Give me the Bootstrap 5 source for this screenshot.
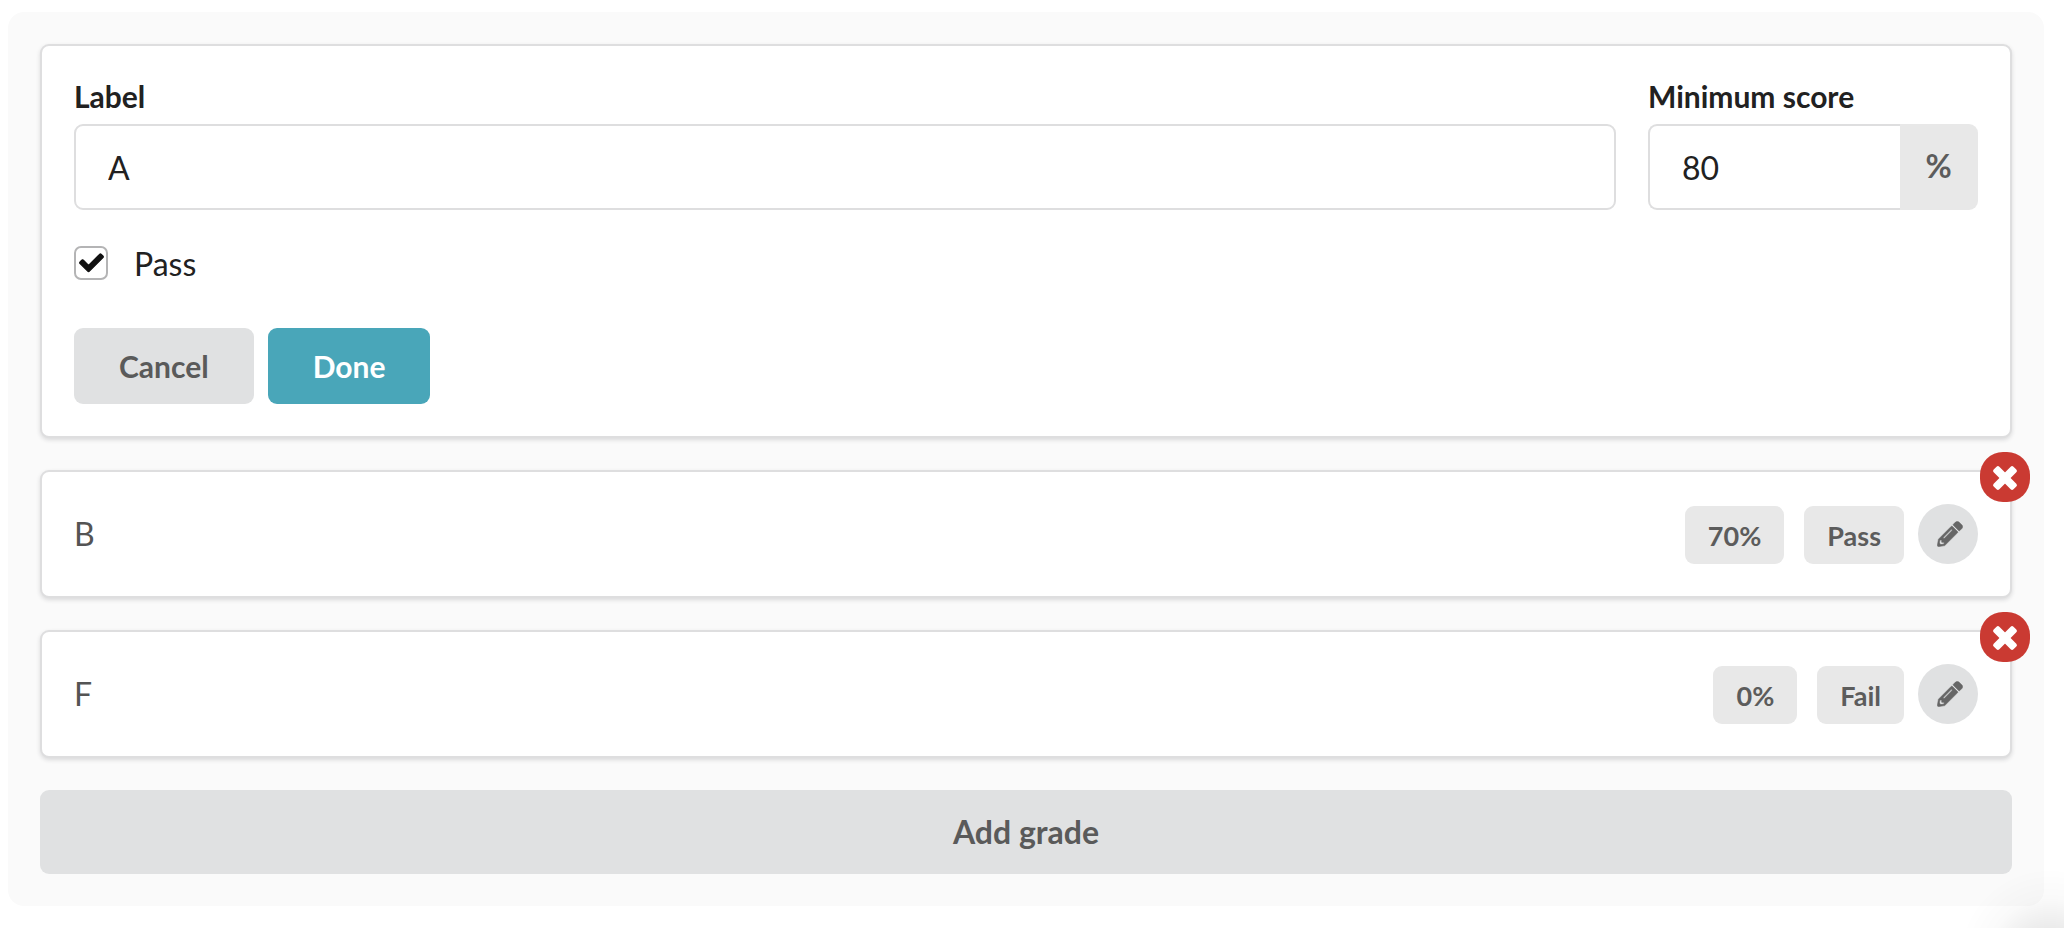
<!DOCTYPE html>
<html lang="en">
<head>
<meta charset="utf-8">
<meta name="viewport" content="width=device-width, initial-scale=1">
<title>Grades</title>
<link href="https://cdn.jsdelivr.net/npm/bootstrap@5.3.0/dist/css/bootstrap.min.css" rel="stylesheet">
<style>
  body { font-family: Lato, "Liberation Sans", sans-serif; font-size: 32px; line-height: 38px; color: #212121; background: #fff; padding: 12px 20px 22px 8px; }
  /* soft glow in the lower right corner of the window */
  body::after { content: ""; position: fixed; right: 0; bottom: 0; width: 140px; height: 60px; pointer-events: none;
    background: radial-gradient(circle at 126px 92px, rgba(0,0,0,.16) 0, rgba(0,0,0,.08) 32px, rgba(0,0,0,.02) 62px, rgba(0,0,0,0) 92px); }
  .grade-panel { background: #fafafa; border-radius: 16px; padding: 32px; gap: 32px; }
  .grade-box { background: #fff; border: 2px solid #dededf; border-radius: 9px; padding: 32px; box-shadow: 0 2px 4px rgba(34,36,38,.15); }
  .field-label { font-size: 30px; line-height: 36px; font-weight: 700; margin-bottom: 10px; }
  .grade-input, .grade-input:focus { height: 86px; border: 2px solid #dededf; border-radius: 9px; padding: 0 32px; font-size: 32px; line-height: 38px; color: #212121; box-shadow: none; }
  .score-field { width: 330px; }
  .unit { width: 79px; border: 0; border-radius: 9px; background: #e8e8e8; color: #5c5c5c; font-size: 32px; font-weight: 700; line-height: 38px; padding: 0 0 2px; }
  .score-field .grade-input { border-right: 0; }
  .fields { gap: 32px; margin-bottom: 33px; }
  .pass-row { gap: 26px; margin-bottom: 45px; }
  .pass-row label { padding-top: 2px; }
  .pass-row .form-check-input { width: 34px; height: 34px; margin: 0; border: 2px solid #b4b4b5; border-radius: 7px; box-shadow: none; }
  .pass-row .form-check-input:checked { background-color: #fff; border-color: #b4b4b5; background-size: 25px 25px; background-position: center;
    background-image: url("data:image/svg+xml,%3Csvg xmlns='http://www.w3.org/2000/svg' viewBox='-16 0 544 544'%3E%3Cpath fill='%23111' stroke='%23111' stroke-width='26' stroke-linejoin='round' d='M173.898 439.404l-166.4-166.4c-9.997-9.997-9.997-26.206 0-36.204l36.203-36.204c9.997-9.998 26.207-9.998 36.204 0L192 312.69 432.095 72.596c9.997-9.997 26.207-9.997 36.204 0l36.203 36.204c9.997 9.997 9.997 26.206 0 36.204l-294.4 294.401c-9.998 9.997-26.207 9.997-36.204-.001z'/%3E%3C/svg%3E"); }
  .actions { gap: 14px; }
  .act { border: 0; border-radius: 9px; font-size: 30px; line-height: 36px; font-weight: 700; padding: 20px 45px; }
  .act-grey, .act-grey:hover { background: #e0e1e2; color: #5a5a5a; }
  .act-teal, .act-teal:hover { background: #49a6b9; color: #fff; }
  .act-wide { font-size: 32px; line-height: 38px; padding: 23px; }
  .grade-name { color: #545454; }
  .tag { background: #e8e8e8; color: #5c5c5c; border-radius: 9px; font-size: 27px; line-height: 32px; font-weight: 700; padding: 14px 23px 12px; }
  .tags { gap: 20px; margin-right: 14px; }
  .edit-btn { width: 60px; height: 60px; border: 0; background: #e0e1e2; color: #666; padding: 0 0 0 4px; }
  .edit-btn svg { width: 26px; height: 26px; }
  .remove-btn { top: -20px; right: -20px; width: 50px; height: 50px; border: 0; border-radius: 23px; background: #ca3a32; color: #fff; padding: 2px 0 0; }
  .remove-btn svg { width: 26px; height: 26px; }
</style>
</head>
<body>
<svg class="d-none" xmlns="http://www.w3.org/2000/svg">
  <symbol id="pencil" viewBox="-8 -8 528 528"><path fill="currentColor" stroke="currentColor" stroke-width="12" stroke-linejoin="round" d="M497.9 142.1l-46.1 46.1c-4.7 4.7-12.3 4.7-17 0l-111-111c-4.7-4.7-4.7-12.3 0-17l46.1-46.1c18.7-18.7 49.1-18.7 67.9 0l60.1 60.1c18.8 18.7 18.8 49.1 0 67.9zM284.2 99.8L21.6 362.4.4 483.9c-2.9 16.4 11.4 30.6 27.8 27.8l121.5-21.3 262.6-262.6c4.7-4.7 4.7-12.3 0-17l-111-111c-4.8-4.7-12.4-4.7-17.1 0zM124.1 339.9c-5.5-5.5-5.5-14.3 0-19.8l154-154c5.5-5.5 14.3-5.5 19.8 0s5.5 14.3 0 19.8l-154 154c-5.5 5.5-14.3 5.5-19.8 0zM88 424h48v36.3l-64.5 11.3-31.1-31.1L51.7 376H88v48z"/></symbol>
  <symbol id="cross" viewBox="-13 -13 26 26"><g fill="currentColor"><rect x="-14" y="-4" width="28" height="8" rx="2" transform="rotate(45)"/><rect x="-14" y="-4" width="28" height="8" rx="2" transform="rotate(-45)"/></g></symbol>
</svg>
<main class="grade-panel d-flex flex-column">
  <form class="grade-box">
    <div class="fields d-flex">
      <div class="flex-grow-1">
        <label class="field-label d-block" for="label">Label</label>
        <input class="form-control grade-input" id="label" type="text" value="A">
      </div>
      <div class="score-field">
        <label class="field-label d-block" for="score">Minimum score</label>
        <div class="input-group flex-nowrap">
          <input class="form-control grade-input" id="score" type="text" inputmode="numeric" value="80">
          <span class="input-group-text unit justify-content-center">%</span>
        </div>
      </div>
    </div>
    <div class="pass-row d-flex align-items-center">
      <input class="form-check-input" type="checkbox" id="pass" checked>
      <label for="pass">Pass</label>
    </div>
    <div class="actions d-flex">
      <button type="button" class="btn act act-grey">Cancel</button>
      <button type="submit" class="btn act act-teal">Done</button>
    </div>
  </form>
  <section class="grade-box position-relative d-flex align-items-center">
    <div class="grade-name flex-grow-1">B</div>
    <div class="d-flex align-items-end">
      <div class="tags d-flex"><span class="tag">70%</span><span class="tag">Pass</span></div>
      <button type="button" class="btn edit-btn rounded-circle d-flex align-items-center justify-content-center" aria-label="Edit B"><svg aria-hidden="true"><use href="#pencil"/></svg></button>
    </div>
    <button type="button" class="btn remove-btn position-absolute d-flex align-items-center justify-content-center" aria-label="Remove B"><svg aria-hidden="true"><use href="#cross"/></svg></button>
  </section>
  <section class="grade-box position-relative d-flex align-items-center">
    <div class="grade-name flex-grow-1">F</div>
    <div class="d-flex align-items-end">
      <div class="tags d-flex"><span class="tag">0%</span><span class="tag">Fail</span></div>
      <button type="button" class="btn edit-btn rounded-circle d-flex align-items-center justify-content-center" aria-label="Edit F"><svg aria-hidden="true"><use href="#pencil"/></svg></button>
    </div>
    <button type="button" class="btn remove-btn position-absolute d-flex align-items-center justify-content-center" aria-label="Remove F"><svg aria-hidden="true"><use href="#cross"/></svg></button>
  </section>
  <button type="button" class="btn act act-grey act-wide w-100">Add grade</button>
</main>
<script src="https://cdn.jsdelivr.net/npm/bootstrap@5.3.0/dist/js/bootstrap.bundle.min.js"></script>
</body>
</html>
